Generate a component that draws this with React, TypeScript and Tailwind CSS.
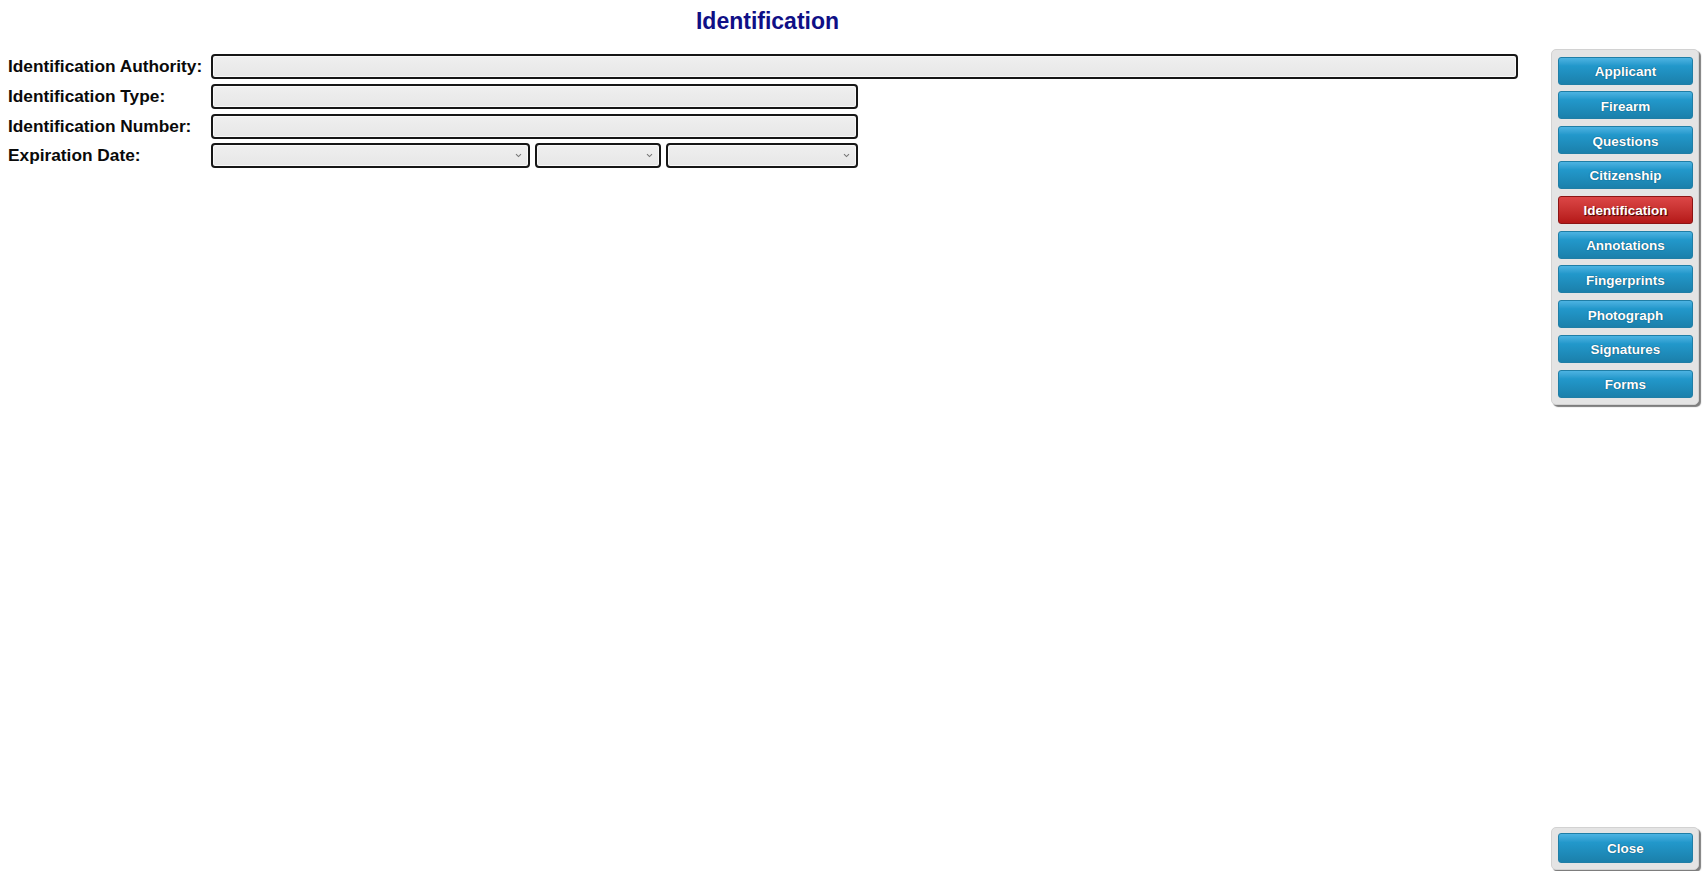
import React from 'react';

const navItems = [
  'Applicant',
  'Firearm',
  'Questions',
  'Citizenship',
  'Identification',
  'Annotations',
  'Fingerprints',
  'Photograph',
  'Signatures',
  'Forms',
];

const font = "font-['Liberation_Sans',Arial,sans-serif]";

function Field({ className = '' }: { className?: string }) {
  return (
    <div
      className={`h-[25px] rounded-[4px] border-2 border-[#161616] bg-gradient-to-b from-[#efefef] to-[#e7e7e7] shadow-[inset_0_0_0_1px_#f8f8f8] ${className}`}
    />
  );
}

function Select({ className = '' }: { className?: string }) {
  return (
    <div
      className={`relative h-[25px] rounded-[4px] border-2 border-[#161616] bg-gradient-to-b from-[#efefef] to-[#e7e7e7] shadow-[inset_0_0_0_1px_#f8f8f8] ${className}`}
    >
      <svg
        className="absolute right-[6px] top-[8px]"
        width="7"
        height="5"
        viewBox="0 0 7 5"
        fill="none"
      >
        <path d="M1 1.2 L3.5 3.6 L6 1.2" stroke="#777" strokeWidth="1.1" />
      </svg>
    </div>
  );
}

function NavButton({ label, active }: { label: string; active?: boolean }) {
  return (
    <button
      className={`h-[28px] w-[135px] rounded-[3px] border pt-[3px] text-[13.5px] font-bold text-white ${
        active
          ? 'border-[#8c1414] bg-gradient-to-b from-[#dc4646] to-[#b51717] [text-shadow:1px_1px_1px_#3a0000]'
          : 'border-[#1f7ea6] bg-gradient-to-b from-[#4cb3e2] via-[#2298cb] via-30% to-[#1b80ab] [text-shadow:0_0_1px_#0d5a7c,0_0_1px_#0d5a7c]'
      }`}
    >
      {label}
    </button>
  );
}

const labelCls = 'text-[17.3px] font-bold text-[#0a0a0a] leading-none whitespace-nowrap';

export default function App() {
  return (
    <div className={`flex h-[871px] w-full bg-white ${font}`}>
      {/* Form area */}
      <main className="w-[1535px] shrink-0">
        <h1 className="pt-[8px] text-center text-[23px] font-bold leading-[26px] text-[#0f0f86]">
          Identification
        </h1>
        <div className="mt-[20.3px] flex flex-col gap-[4.7px] pl-[8px]">
          <div className="flex items-center">
            <span className={`w-[203px] ${labelCls}`}>Identification Authority:</span>
            <Field className="w-[1307px]" />
          </div>
          <div className="flex items-center">
            <span className={`w-[203px] ${labelCls}`}>Identification Type:</span>
            <Field className="w-[647px]" />
          </div>
          <div className="flex items-center">
            <span className={`w-[203px] ${labelCls}`}>Identification Number:</span>
            <Field className="w-[647px]" />
          </div>
          <div className="flex items-center">
            <span className={`w-[203px] ${labelCls}`}>Expiration Date:</span>
            <div className="flex gap-[5px]">
              <Select className="w-[319px]" />
              <Select className="w-[126px]" />
              <Select className="w-[192px]" />
            </div>
          </div>
        </div>
      </main>

      {/* Side nav */}
      <aside className="ml-[16px] flex w-[150px] flex-col justify-between pt-[49px] pb-[1px]">
        <div className="flex w-[148px] flex-col gap-[6.8px] rounded-[5px] border border-[#d2d2d2] bg-[#e4e4e4] p-[6px] pt-[6.7px] shadow-[2px_2px_1px_#7d7d7d]">
          {navItems.map((item) => (
            <NavButton key={item} label={item} active={item === 'Identification'} />
          ))}
        </div>
        <div className="w-[148px] rounded-[5px] border border-[#d2d2d2] bg-[#e4e4e4] p-[5px_6px_6px] shadow-[2px_2px_1px_#7d7d7d]">
          <button className="h-[30px] w-[135px] rounded-[3px] border border-[#1f7ea6] bg-gradient-to-b from-[#4cb3e2] via-[#2298cb] via-30% to-[#1b80ab] pt-[3px] text-[13.5px] font-bold text-white [text-shadow:0_0_1px_#0d5a7c,0_0_1px_#0d5a7c]">
            Close
          </button>
        </div>
      </aside>
    </div>
  );
}
